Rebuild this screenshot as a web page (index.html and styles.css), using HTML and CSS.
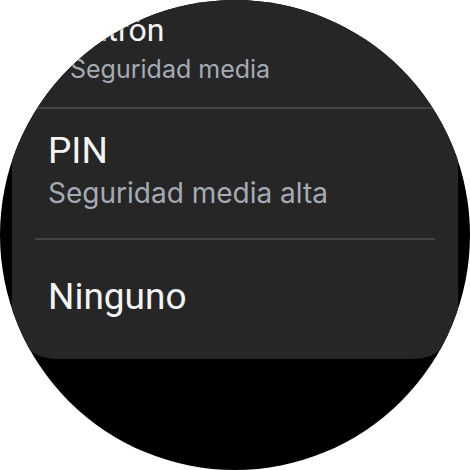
FILE: index.html
```html
<!DOCTYPE html>
<html lang="es">
<head>
<meta charset="utf-8">
<title>Bloqueo de pantalla</title>
<link rel="stylesheet" href="styles.css">
</head>
<body>
<div class="watch">
  <div class="card">
    <div class="item item-first">
      <div class="title">Patrón</div>
      <div class="subtitle">Seguridad media</div>
    </div>
    <div class="divider"></div>
    <div class="item">
      <div class="title">PIN</div>
      <div class="subtitle">Seguridad media alta</div>
    </div>
    <div class="divider"></div>
    <div class="item item-last">
      <div class="title">Ninguno</div>
    </div>
  </div>
</div>
</body>
</html>
```
FILE: styles.css
```css
html, body {
  margin: 0;
  padding: 0;
  background: #ffffff;
}
.watch {
  width: 470px;
  height: 470px;
  border-radius: 50%;
  overflow: hidden;
  background: #000000;
  font-family: Roboto, "Noto Sans", sans-serif;
}
.card {
  margin-left: 12px;
  width: 446px;
  background: #262626;
  border-radius: 0 0 44px 44px;
  display: flex;
  flex-direction: column;
}
.item {
  padding: 20px 0 29px 36px;
  display: flex;
  flex-direction: column;
}
.title {
  color: #f4f4f4;
  font-size: 37px;
  line-height: 44px;
}
.subtitle {
  color: #a5abb4;
  font-family: Inter, Roboto, sans-serif;
  font-size: 28px;
  line-height: 32px;
  margin-top: 4px;
}
.item-first {
  padding: 11px 0 23px 58px;
}
.item-first .title {
  font-size: 32px;
  line-height: 38px;
}
.item-first .subtitle {
  font-size: 25px;
  line-height: 30px;
  margin-top: 5px;
}
.item-last {
  padding: 35px 0 40px 36px;
}
.divider {
  height: 2px;
  margin: 0 23px;
  background: #434343;
}
```
